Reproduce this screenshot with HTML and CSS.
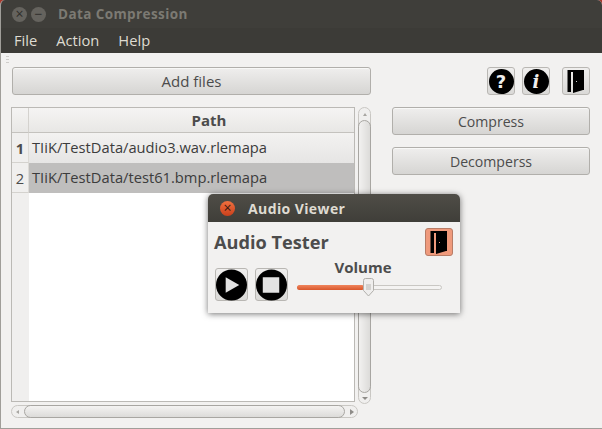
FILE: index.html
```html
<!DOCTYPE html>
<html lang="en">
<head>
  <meta charset="UTF-8">
  <title>Data Compression</title>
  <link rel="stylesheet" href="styles.css">
</head>
<body>
  <div class="window">
    <div class="titlebar">
      <span class="winBtn">&times;</span>
      <span class="winBtn">&minus;</span>
      <span class="winTitle">Data Compression</span>
    </div>
    <div class="menubar">
      <span>File</span>
      <span>Action</span>
      <span>Help</span>
    </div>
    <div class="content">
      <div class="grip"></div>
      <div class="leftCol">
        <button class="btn addBtn">Add files</button>
        <div class="tableWrap">
          <div class="table">
            <div class="corner"></div>
            <div class="colHead">Path</div>
            <div class="rowHead bold">1</div>
            <div class="cell">TIiK/TestData/audio3.wav.rlemapa</div>
            <div class="rowHead">2</div>
            <div class="cell selected">TIiK/TestData/test61.bmp.rlemapa</div>
            <div class="rowFill"></div>
            <div class="cellFill"></div>
          </div>
          <div class="vScroll">
            <div class="arrow arrowUp"></div>
            <div class="vThumb"></div>
            <div class="arrow arrowDown"></div>
          </div>
        </div>
        <div class="hScroll">
          <div class="arrow arrowLeft"></div>
          <div class="hThumb"></div>
          <div class="arrow arrowRight"></div>
        </div>
      </div>
      <div class="rightCol">
        <div class="iconRow">
          <button class="iconBtn"><span class="disc">?</span></button>
          <button class="iconBtn"><span class="disc discInfo">i</span></button>
          <button class="iconBtn doorGap">
            <svg width="26" height="26" viewBox="0 0 26 26">
              <path d="M4.500 2h16.500v20h-1V4H8v20H4.500z" fill="#000"/>
              <path d="M10 4h10v18l-10 3z" fill="#000"/>
              <rect x="13" y="13" width="1" height="1" fill="#ccc"/>
            </svg>
          </button>
        </div>
        <button class="btn sideBtn">Compress</button>
        <button class="btn sideBtn">Decomperss</button>
      </div>
    </div>
  </div>

  <div class="popup">
    <div class="popupBar">
      <span class="closeBtn">&times;</span>
      <span class="popupTitle">Audio Viewer</span>
    </div>
    <div class="popupBody">
      <div class="popupTop">
        <span class="popupHead">Audio Tester</span>
        <button class="iconBtn exitBtn">
          <svg width="26" height="26" viewBox="0 0 26 26">
            <path d="M4.500 2h16.500v20h-1V4H8v20H4.500z" fill="#000"/>
            <path d="M10 4h10v18l-10 3z" fill="#000"/>
            <rect x="13" y="13" width="1" height="1" fill="#ef9a7c"/>
          </svg>
        </button>
      </div>
      <div class="popupControls">
        <button class="iconBtn mediaBtn">
          <svg width="32" height="32" viewBox="0 0 32 32">
            <circle cx="16" cy="16" r="16" fill="#000"/>
            <path d="M10 8l14 8-14 8z" fill="#e2e2e2"/>
          </svg>
        </button>
        <button class="iconBtn mediaBtn">
          <svg width="32" height="32" viewBox="0 0 32 32">
            <circle cx="16" cy="16" r="16" fill="#000"/>
            <rect x="7" y="8" width="17" height="16" fill="#e2e2e2"/>
          </svg>
        </button>
        <div class="volume">
          <div class="volumeLabel">Volume</div>
          <div class="slider">
            <div class="sliderFill"></div>
            <svg class="sliderKnob" width="13" height="21" viewBox="0 0 13 21">
              <path d="M1.5 3.5a2 2 0 0 1 2-2h6a2 2 0 0 1 2 2v10l-5 5.500-5-5.500z" fill="#efeeed" stroke="#b1afab"/>
              <path d="M4 8h5M4 10h5M4 12h5" stroke="#b8b6b2"/>
            </svg>
          </div>
        </div>
      </div>
    </div>
  </div>
</body>
</html>
```

FILE: styles.css
```css
* {
  box-sizing: border-box;
}

body {
  font-family: 'Open Sans', 'Noto Sans', sans-serif;
  font-size: 14px;
  background-color: #a8382c;
  margin: 0;
  padding: 0;
  color: #4c4c4c;
  overflow: hidden;
}

.window {
  position: relative;
  width: 602px;
  height: 429px;
  display: flex;
  flex-direction: column;
  background-color: #f2f1f0;
  border-radius: 5px 5px 0 0;
  overflow: hidden;
  border-bottom: 1px solid #a09e99;
  border-left: 1px solid #a09e99;
}

.titlebar {
  height: 28px;
  margin-left: -1px;
  background-color: #3f3e3a;
  display: flex;
  align-items: center;
  padding-left: 12px;
  gap: 4px;
}

.winBtn {
  width: 15px;
  height: 15px;
  border-radius: 50%;
  background-color: #65635e;
  color: #2f2e2b;
  font-size: 14px;
  line-height: 14px;
  text-align: center;
}

.winTitle {
  margin-left: 8px;
  color: #7c7a73;
  font-weight: bold;
  font-size: 13.5px;
  letter-spacing: 0.4px;
}

.menubar {
  height: 25px;
  margin-left: -1px;
  background-color: #3c3b37;
  color: #dfdbd2;
  display: flex;
  gap: 19px;
  padding-left: 14px;
  line-height: 24px;
  font-size: 14.7px;
}

.content {
  position: relative;
  flex: 1;
  display: flex;
  padding: 14px 11px 0 11px;
}

.grip {
  position: absolute;
  left: 5px;
  top: 3px;
  width: 3px;
  height: 8px;
  background: repeating-linear-gradient(#cfcdca 0 1px, transparent 1px 3px);
}

.leftCol {
  width: 360px;
  display: flex;
  flex-direction: column;
}

.btn {
  font-family: inherit;
  font-size: 14.1px;
  color: #4c4c4c;
  height: 28px;
  padding: 0;
  border: 1px solid #b1afab;
  border-radius: 3px;
  background: linear-gradient(#efeeed, #d6d5d3);
  box-shadow: inset 0 1px 0 #f8f8f7;
}

.addBtn {
  width: 359px;
  font-size: 15px;
}

.tableWrap {
  margin: 12px 0 0 -1px;
  height: 297px;
  display: flex;
  align-items: flex-start;
}

.table {
  width: 344px;
  height: 295px;
  display: grid;
  grid-template-columns: 17px 1fr;
  grid-template-rows: 25px 30px 30px 1fr;
  border: 1px solid #bbb9b5;
  background-color: #fff;
}

.corner,
.colHead {
  background: linear-gradient(#f5f4f3, #e8e7e5);
  border-bottom: 1px solid #c4c2be;
  border-right: 1px solid #d4d2ce;
}

.colHead {
  font-weight: bold;
  font-size: 15px;
  text-align: center;
  line-height: 24px;
  border-right: 0;
  padding-left: 35px;
}

.rowHead {
  background-color: #f0efee;
  border-bottom: 1px solid #d4d2ce;
  border-right: 1px solid #dcdad6;
  font-size: 14.7px;
  text-align: center;
  line-height: 30px;
}

.bold {
  font-weight: bold;
}

.rowFill {
  background-color: #f0efee;
}

.cell {
  color: #3c3c3c;
  font-size: 14.7px;
  padding-left: 3px;
  line-height: 29px;
  background: linear-gradient(#f3f2f1, #e6e5e4);
  white-space: nowrap;
}

.cell.selected {
  background: #bfbebd;
}

.cellFill {
  background-color: #fff;
}

.vScroll {
  width: 13px;
  height: 297px;
  margin-left: 3px;
  border: 1px solid #c9c7c3;
  border-radius: 7px;
  display: flex;
  flex-direction: column;
  position: relative;
  background-color: #f0efee;
}

.vThumb {
  flex: 1;
  margin: 0 -1px;
  border: 1px solid #a8a6a2;
  border-radius: 7px;
  background: linear-gradient(90deg, #f2f1f0, #dcdbd9);
}

.arrow {
  flex: none;
  width: 0;
  height: 0;
  border-style: solid;
  border-color: transparent;
}

.arrowUp {
  margin: 5px auto 4px;
  border-width: 0 2px 3px;
  border-bottom-color: #a8a6a2;
}

.arrowDown {
  margin: 4px auto 3px;
  border-width: 3px 3px 0;
  border-top-color: #8e8c88;
}

.hScroll {
  margin: 1px 0 0 -1px;
  width: 347px;
  height: 13px;
  border: 1px solid #c9c7c3;
  border-radius: 7px;
  display: flex;
  align-items: center;
  background-color: #f0efee;
}

.hThumb {
  flex: 1;
  height: 13px;
  margin: 0 5px 0 5px;
  border: 1px solid #a8a6a2;
  border-radius: 7px;
  background: linear-gradient(#f4f3f2, #dcdbd9);
}

.arrowLeft {
  margin-left: 4px;
  border-width: 2px 3px 2px 0;
  border-right-color: #a8a6a2;
}

.arrowRight {
  margin-right: 3px;
  border-width: 3px 0 3px 4px;
  border-left-color: #8e8c88;
}

.rightCol {
  margin-left: 20px;
  width: 198px;
  display: flex;
  flex-direction: column;
}

.iconRow {
  display: flex;
  justify-content: flex-end;
  gap: 7px;
  height: 40px;
}

.iconBtn {
  width: 28px;
  height: 28px;
  padding: 0;
  border: 1px solid #b9b7b3;
  border-radius: 3px;
  background: linear-gradient(#f0efee, #dad9d7);
  display: flex;
  align-items: center;
  justify-content: center;
}

.doorGap {
  margin-left: 5px;
}

.disc {
  width: 25px;
  height: 25px;
  border-radius: 50%;
  background-color: #000;
  color: #f0efee;
  font-family: 'DejaVu Sans', sans-serif;
  font-weight: bold;
  font-size: 18px;
  line-height: 25px;
  text-align: center;
}

.discInfo {
  font-family: 'DejaVu Serif', serif;
  font-style: italic;
}

.sideBtn {
  margin-bottom: 12px;
}

.popup {
  position: absolute;
  left: 208px;
  top: 194px;
  width: 252px;
  height: 119px;
  background-color: #f2f1f0;
  border-radius: 5px 5px 0 0;
  box-shadow: 0 1px 6px rgba(0, 0, 0, 0.55);
  display: flex;
  flex-direction: column;
}

.popupBar {
  height: 28px;
  border-radius: 5px 5px 0 0;
  background: linear-gradient(#4f4d47, #3f3e39);
  display: flex;
  align-items: center;
  padding-left: 12px;
}

.closeBtn {
  width: 15px;
  height: 15px;
  border-radius: 50%;
  background: linear-gradient(#f0703f, #c9401c);
  color: #3a1a10;
  font-size: 14px;
  line-height: 14px;
  text-align: center;
}

.popupTitle {
  margin-left: 13px;
  color: #dfdbd2;
  font-weight: bold;
  font-size: 14px;
  letter-spacing: 0.4px;
}

.popupBody {
  flex: 1;
  padding: 6px 7px 0 6px;
}

.popupTop {
  display: flex;
  justify-content: space-between;
  align-items: center;
  height: 28px;
}

.popupHead {
  font-weight: bold;
  font-size: 18.2px;
}

.exitBtn {
  background: #ef9a7c;
  border-color: #b87c66;
}

.popupControls {
  display: flex;
  gap: 7px;
  margin: 12px 0 0 1px;
}

.mediaBtn {
  width: 33px;
  height: 33px;
}

.volume {
  margin-left: 2px;
  width: 145px;
  text-align: center;
}

.volumeLabel {
  font-weight: bold;
  font-size: 15px;
  line-height: 19px;
  margin-top: -10px;
  padding-right: 13px;
}

.slider {
  position: relative;
  height: 5px;
  margin-top: 8px;
  border: 1px solid #c9c7c3;
  border-radius: 3px;
  background-color: #f4f3f2;
}

.sliderFill {
  width: 47%;
  height: 5px;
  margin-top: -1px;
  margin-left: -1px;
  border-radius: 3px;
  background: linear-gradient(#f0855c, #d9562b);
}

.sliderKnob {
  position: absolute;
  left: 64px;
  top: -9px;
}
```
